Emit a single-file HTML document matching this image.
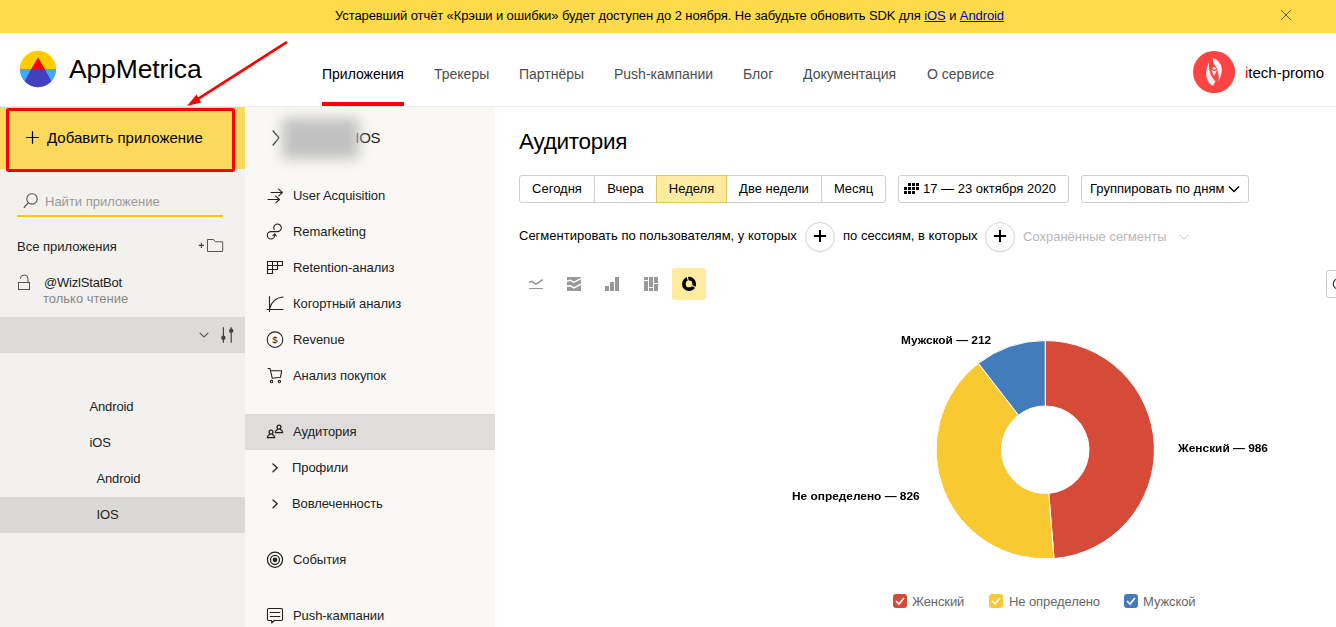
<!DOCTYPE html>
<html lang="ru">
<head>
<meta charset="utf-8">
<title>AppMetrica</title>
<style>
*{box-sizing:border-box;margin:0;padding:0}
html,body{width:1336px;height:627px;overflow:hidden;background:#fff}
body{font-family:"Liberation Sans",sans-serif;font-size:13px;color:#000;position:relative}
.abs{position:absolute}
.t{position:absolute;white-space:nowrap;line-height:1}
#banner{position:absolute;left:0;top:0;width:1336px;height:33px;background:#ffdb4c}
#banner .msg{position:absolute;left:335px;top:8px;font-size:13px;line-height:15px;white-space:nowrap;color:#000;letter-spacing:-0.1px}
#banner a{color:#0000cc;text-decoration:underline}
#header{position:absolute;left:0;top:33px;width:1336px;height:74px;background:#fff;border-bottom:1px solid #ececf2}
.nav{font-size:14px;color:#4d4d4d}
#left{position:absolute;left:0;top:107px;width:245px;height:520px;background:#f3f1ed}
#mid{position:absolute;left:245px;top:107px;width:250px;height:520px;background:#f9f8f5}
.mi{font-size:13px;color:#222;letter-spacing:-0.07px}
.btn{position:absolute;top:175px;height:28px;border:1px solid #cfcfcf;background:#fff;font-size:13px;line-height:26px;text-align:center;white-space:nowrap}
.circ{position:absolute;width:30px;height:30px;border-radius:50%;border:1px solid #d4d4d4;background:#fff;box-shadow:0 1px 1px rgba(0,0,0,.06)}
.lbl{font-size:11px;font-weight:bold;color:#000;transform-origin:0 0;transform:scaleX(1.08)}
.lg{font-size:13px;color:#666;top:595px;letter-spacing:-0.1px}
.cb{position:absolute;top:594px;width:14px;height:14px;border-radius:3px}
</style>
</head>
<body>

<!-- top banner -->
<div id="banner">
  <div class="msg">Устаревший отчёт «Крэши и ошибки» будет доступен до 2 ноября. Не забудьте обновить SDK для <a>iOS</a> и <a>Android</a></div>
  <svg class="abs" style="left:1280px;top:9px" width="12" height="12" viewBox="0 0 12 12"><path d="M1 1L11 11M11 1L1 11" stroke="#665c2c" stroke-width="1" fill="none"/></svg>
</div>

<!-- header -->
<div id="header"><div class="abs" style="left:0;top:-1px;width:1336px;height:75px">
  <svg class="abs" style="left:19px;top:18px" width="38" height="38" viewBox="0 0 38 38">
    <defs><clipPath id="lc"><circle cx="19" cy="19" r="18.2"/></clipPath></defs>
    <g clip-path="url(#lc)">
      <rect x="0" y="0" width="38" height="19" fill="#ffcc00"/>
      <rect x="0" y="19" width="38" height="19" fill="#3fa9ff"/>
      <path d="M19 7.5L25.8 19H12.2Z" fill="#ff0000"/>
      <path d="M12.2 19H25.8L36 38H2Z" fill="#4340bd"/>
    </g>
  </svg>
  <div class="t" id="logo" style="left:69px;top:24px;font-size:26.5px;color:#000;letter-spacing:-0.15px">AppMetrica</div>

  <div class="t nav" id="n1" style="left:322px;top:35px;color:#000">Приложения</div>
  <div class="t nav" id="n2" style="left:434px;top:35px">Трекеры</div>
  <div class="t nav" id="n3" style="left:519px;top:35px">Партнёры</div>
  <div class="t nav" id="n4" style="left:614px;top:35px">Push-кампании</div>
  <div class="t nav" id="n5" style="left:743px;top:35px">Блог</div>
  <div class="t nav" id="n6" style="left:803px;top:35px">Документация</div>
  <div class="t nav" id="n7" style="left:927px;top:35px">О сервисе</div>
  <div class="abs" style="left:322px;top:70px;width:82px;height:4px;background:#ff0000"></div>

  <svg class="abs" style="left:1193px;top:19px" width="42" height="42" viewBox="0 0 42 42">
    <circle cx="21.050" cy="21.050" r="21.050" fill="#fb4443"/>
    <g fill="#ffeceb">
    <path d="M19.600 7C25.500 8.500 29.800 14 28.800 20.500C28.300 24 27.200 27.500 25.500 30.200C26.200 25 25.300 19.800 23.200 16.200C22.200 14.400 21.300 13.200 20.500 12.400Z"/>
    <path d="M20 34.800C15.500 33 12.500 27 13.200 20.500C13.700 17 14.700 13.800 16 11.400C15.600 16.500 16.500 21.800 18.800 25.600C20 27.600 21.200 29.300 22.500 30.600Z"/>
    <circle cx="21.100" cy="17.200" r="1.500"/>
    <path d="M18 18.800L21.100 20.300L24.200 18.800L22.400 22.200L21.100 25.300L19.800 22.200Z"/>
    </g>
  </svg>
  <div class="t" id="user" style="left:1245px;top:33px;font-size:15px;color:#000"><span style="color:#f00">i</span>tech-promo</div>
</div></div>

<!-- left sidebar -->
<div id="left">
  <div class="abs" style="left:0;top:0;width:245px;height:62px;background:#fad95c"></div>
  <svg class="abs" style="left:26px;top:24px" width="13" height="13" viewBox="0 0 13 13"><path d="M6.500 0.200V12.800M0.200 6.500H12.800" stroke="#000" stroke-width="1.200" fill="none"/></svg>
  <div class="t" id="add" style="left:47px;top:23px;font-size:15px;color:#000">Добавить приложение</div>

  <svg class="abs" style="left:22px;top:86px" width="18" height="18" viewBox="0 0 18 18"><circle cx="10" cy="5.900" r="5.200" stroke="#555" stroke-width="1.100" fill="none"/><path d="M6.300 9.600L1.900 14.900" stroke="#555" stroke-width="1.300"/></svg>
  <div class="t" id="srch" style="left:45px;top:88px;font-size:13px;color:#999">Найти приложение</div>
  <div class="abs" style="left:17px;top:108px;width:206px;height:2px;background:#ffc800"></div>

  <div class="t" id="allapps" style="left:17px;top:133px;font-size:13px;color:#222">Все приложения</div>
  <svg class="abs" style="left:198px;top:135px" width="7" height="7" viewBox="0 0 7 7"><path d="M3.400 0.800V6M0.800 3.400H6" stroke="#444" stroke-width="1.100" fill="none"/></svg>
  <svg class="abs" style="left:207px;top:132px" width="17" height="14" viewBox="0 0 17 14"><path d="M0.500 0.500H6.500L8.500 2.800H15.700V12.500H0.500Z" stroke="#555" stroke-width="1" fill="none" stroke-linejoin="round"/></svg>

  <svg class="abs" style="left:17px;top:167px" width="14" height="18" viewBox="0 0 14 18"><rect x="1.500" y="8.500" width="11" height="7" stroke="#555" fill="none"/><path d="M3.400 4.900A3.800 3.800 0 0 1 11 4.700V8.500" stroke="#555" fill="none"/></svg>
  <div class="t" id="wiz" style="left:44px;top:169px;font-size:13px;color:#222;letter-spacing:-0.2px">@WizlStatBot</div>
  <div class="t" id="ro" style="left:43px;top:185px;font-size:13px;color:#888">только чтение</div>

  <div class="abs" style="left:0;top:210px;width:245px;height:36px;background:#dddbd7"></div>
  <svg class="abs" style="left:197.500px;top:224px" width="12" height="8" viewBox="0 0 12 8"><path d="M1.700 1.800L6 6L10.300 1.800" stroke="#555" stroke-width="1.100" fill="none"/></svg>
  <svg class="abs" style="left:219px;top:219px" width="16" height="18" viewBox="0 0 16 18"><path d="M4.400 1.200V16.700M12.200 1.200V16.700" stroke="#444" stroke-width="1.200" fill="none"/><circle cx="4.400" cy="11.800" r="2.200" fill="#444"/><circle cx="12.200" cy="4.800" r="2.200" fill="#444"/></svg>

  <div class="t" id="a1" style="left:89.400px;top:293px;font-size:13px;color:#222;letter-spacing:-0.1px">Android</div>
  <div class="t" id="a2" style="left:89.400px;top:329px;font-size:13px;color:#222;letter-spacing:-0.1px">iOS</div>
  <div class="t" id="a3" style="left:96.400px;top:365px;font-size:13px;color:#222;letter-spacing:-0.1px">Android</div>
  <div class="abs" style="left:0;top:390px;width:245px;height:36px;background:#dbd9d5"></div>
  <div class="t" id="a4" style="left:96.400px;top:401px;font-size:13px;color:#222;letter-spacing:-0.1px">IOS</div>
</div>

<!-- middle nav -->
<div id="mid">
  <svg class="abs" style="left:26px;top:21px" width="10" height="20" viewBox="0 0 10 20"><path d="M1.700 2.500L8 9.800L1.700 17.500" stroke="#333" stroke-width="1.200" fill="none"/></svg>
  <div class="t" id="ios" style="left:110.300px;top:23px;font-size:15px;color:#222;letter-spacing:-0.3px">IOS</div>
  <div class="abs" style="left:37px;top:11px;width:77px;height:41px;background:#c1c1c1;border-radius:4px;filter:blur(6.500px)"></div>

  <div class="t mi" style="left:48px;top:82px">User Acquisition</div>
  <div class="t mi" style="left:48px;top:118px">Remarketing</div>
  <div class="t mi" style="left:48px;top:154px">Retention-анализ</div>
  <div class="t mi" style="left:48px;top:190px">Когортный анализ</div>
  <div class="t mi" style="left:48px;top:226px">Revenue</div>
  <div class="t mi" style="left:48px;top:262px">Анализ покупок</div>
  <div class="abs" style="left:0;top:307px;width:250px;height:36px;background:#dfddd9"></div>
  <div class="t mi" style="left:48px;top:318px">Аудитория</div>
  <div class="t mi" style="left:47px;top:354px">Профили</div>
  <div class="t mi" style="left:47px;top:390px">Вовлеченность</div>
  <div class="t mi" style="left:48px;top:446px">События</div>
  <div class="t mi" style="left:48px;top:502px">Push-кампании</div>
</div>

<!-- content -->
<div class="t" id="h1" style="left:519px;top:130.5px;font-size:22.5px;color:#000;letter-spacing:-0.3px">Аудитория</div>

<div class="btn" style="left:519px;width:76px;border-radius:3px 0 0 3px">Сегодня</div>
<div class="btn" style="left:594px;width:63px">Вчера</div>
<div class="btn" style="left:656px;width:71px;background:#ffeba0;border-color:#e0c766;z-index:2">Неделя</div>
<div class="btn" style="left:726px;width:96px">Две недели</div>
<div class="btn" style="left:821px;width:65px;border-radius:0 3px 3px 0">Месяц</div>

<div class="btn" style="left:898px;width:171px;border-radius:3px;text-align:left;padding-left:24px">17 — 23 октября 2020</div>
<svg class="abs" style="left:904px;top:183px" width="15" height="11" viewBox="0 0 15 11" shape-rendering="crispEdges"><g fill="#000">
<rect x="4" y="0" width="3" height="3"/><rect x="8" y="0" width="3" height="3"/><rect x="12" y="0" width="3" height="3"/>
<rect x="0" y="4" width="3" height="3"/><rect x="4" y="4" width="3" height="3"/><rect x="8" y="4" width="3" height="3"/><rect x="12" y="4" width="3" height="3"/>
<rect x="0" y="8" width="3" height="3"/><rect x="4" y="8" width="3" height="3"/><rect x="8" y="8" width="3" height="3"/></g></svg>

<div class="btn" style="left:1081px;width:168px;border-radius:3px;text-align:left;padding-left:8px">Группировать по дням</div>
<svg class="abs" style="left:1228px;top:185px" width="12" height="8" viewBox="0 0 12 8"><path d="M1 1.5L6 6.5L11 1.5" stroke="#000" stroke-width="1.4" fill="none"/></svg>

<div class="t" id="seg1" style="left:519px;top:229px;font-size:13px;color:#000">Сегментировать по пользователям, у которых</div>
<div class="circ" style="left:805px;top:222px"></div>
<svg class="abs" style="left:813px;top:229px" width="14" height="14" viewBox="0 0 14 14"><path d="M7 0.900V13.100M0.900 7H13.100" stroke="#000" stroke-width="2"/></svg>
<div class="t" id="seg2" style="left:843px;top:229px;font-size:13px;color:#000">по сессиям, в которых</div>
<div class="circ" style="left:985px;top:222px"></div>
<svg class="abs" style="left:993px;top:229px" width="14" height="14" viewBox="0 0 14 14"><path d="M7 0.900V13.100M0.900 7H13.100" stroke="#000" stroke-width="2"/></svg>
<div class="t" id="seg3" style="left:1023px;top:229.500px;font-size:13px;color:#b8b8b8">Сохранённые сегменты</div>
<svg class="abs" style="left:1178px;top:233px" width="12" height="8" viewBox="0 0 12 8"><path d="M1 1.5L6 6L11 1.5" stroke="#ccc" stroke-width="1" fill="none"/></svg>

<!-- chart type icons -->
<svg class="abs" style="left:528px;top:277px" width="16" height="14" viewBox="0 0 16 14"><path d="M1 5.700C2.300 4.500 3.300 3.900 4.300 4.600L7.900 7.100L14.900 2.700" stroke="#929292" stroke-width="1.500" fill="none" stroke-linejoin="round"/><path d="M1 11.500H15" stroke="#999" stroke-width="1"/></svg>
<svg class="abs" style="left:567px;top:277px" width="14" height="14" viewBox="0 0 14 14"><rect width="14" height="14" fill="#999"/><path d="M-1 4.100L3.400 3.300L6.900 5.300L15 1" stroke="#fff" stroke-width="1.400" fill="none"/><path d="M-1 9.500L3.400 8.700L6.900 10.900L15 6.600" stroke="#fff" stroke-width="1.400" fill="none"/></svg>
<svg class="abs" style="left:605px;top:277px" width="14" height="14" viewBox="0 0 14 14"><rect x="0" y="9" width="4" height="5" fill="#999"/><rect x="5" y="5" width="4" height="9" fill="#999"/><rect x="10" y="0" width="4" height="14" fill="#999"/></svg>
<svg class="abs" style="left:644px;top:277px" width="14" height="14" viewBox="0 0 14 14" shape-rendering="crispEdges"><g fill="#999"><rect x="0" y="0" width="4" height="3"/><rect x="0" y="4" width="4" height="10"/><rect x="5" y="0" width="4" height="10"/><rect x="5" y="11" width="4" height="3"/><rect x="10" y="0" width="4" height="6"/><rect x="10" y="7" width="4" height="7"/></g></svg>
<div class="abs" style="left:672px;top:268px;width:34px;height:32px;background:#ffeba0;border-radius:3px"></div>
<svg class="abs" style="left:681px;top:276px" width="16" height="16" viewBox="0 0 16 16"><circle cx="8.050" cy="7.900" r="5.200" stroke="#000" stroke-width="3.700" fill="none"/><path d="M8.050 7.900L6.100 0.100M8.050 7.900L15.200 11.700" stroke="#ffeba0" stroke-width="1.100"/></svg>

<div class="abs" style="left:1326px;top:270px;width:20px;height:28px;border:1px solid #ccc;border-radius:3px;background:#fff"></div>
<svg class="abs" style="left:1330px;top:277px" width="6" height="14" viewBox="0 0 6 14"><ellipse cx="8" cy="6.900" rx="4.700" ry="5" stroke="#333" stroke-width="1.200" fill="none"/></svg>

<!-- donut -->
<svg class="abs" style="left:925px;top:330px" width="240" height="240" viewBox="-120 -120 240 240" id="donut"><g transform="translate(0.25,-0.25)">
<path d="M0.00 -109.20A109.2 109.2 0 0 1 8.80 108.84L3.53 43.61A43.75 43.75 0 0 0 0.00 -43.75Z" fill="#d64b38" stroke="#fff" stroke-width="1" stroke-linejoin="round"/>
<path d="M8.80 108.84A109.2 109.2 0 0 1 -66.79 -86.39L-26.76 -34.61A43.75 43.75 0 0 0 3.53 43.61Z" fill="#f9c932" stroke="#fff" stroke-width="1" stroke-linejoin="round"/>
<path d="M-66.79 -86.39A109.2 109.2 0 0 1 -0.00 -109.20L-0.00 -43.75A43.75 43.75 0 0 0 -26.76 -34.61Z" fill="#437cbb" stroke="#fff" stroke-width="1" stroke-linejoin="round"/>
</g></svg>

<div class="t lbl" id="l1" style="left:901px;top:335px">Мужской — 212</div>
<div class="t lbl" id="l2" style="left:1177.500px;top:443px">Женский — 986</div>
<div class="t lbl" id="l3" style="left:792px;top:491px">Не определено — 826</div>

<div class="cb" style="left:893px;background:#d64b38"></div>
<div class="t lg" id="g1" style="left:912px">Женский</div>
<div class="cb" style="left:989px;background:#f9c932"></div>
<div class="t lg" id="g2" style="left:1009px">Не определено</div>
<div class="cb" style="left:1124px;background:#437cbb"></div>
<div class="t lg" id="g3" style="left:1143px">Мужской</div>
<svg class="abs" style="left:893px;top:594px" width="14" height="14" viewBox="0 0 14 14"><path d="M3 7L6 10L11 4" stroke="#fff" stroke-width="1.6" fill="none"/></svg>
<svg class="abs" style="left:989px;top:594px" width="14" height="14" viewBox="0 0 14 14"><path d="M3 7L6 10L11 4" stroke="#fff" stroke-width="1.6" fill="none"/></svg>
<svg class="abs" style="left:1124px;top:594px" width="14" height="14" viewBox="0 0 14 14"><path d="M3 7L6 10L11 4" stroke="#fff" stroke-width="1.6" fill="none"/></svg>


<!-- mid nav icons (page coordinates) -->
<svg class="abs" style="left:0;top:0;pointer-events:none" width="1336" height="627" viewBox="0 0 1336 627" id="icons">
<g fill="none" stroke="#222" stroke-width="1.1" stroke-linecap="round" stroke-linejoin="round">
  <!-- user acquisition -->
  <path d="M271 192.5H282.3M278.6 189.2L282.4 192.5L278.8 195.8"/>
  <path d="M268 199.5H279.4M275.6 196.2L279.5 199.5L275.8 202.8"/>
  <!-- remarketing -->
  <path d="M274.7 235.4A3.7 3.7 0 1 1 271 231.6H277.7A3.8 3.8 0 1 0 274.2 229.6"/>
  <path d="M272.9 235.6L274.7 233.9L276.3 235.8"/>
  <!-- retention grid -->
  <path stroke-linecap="butt" d="M267 261.500H283M267 265.500H283M267 269.500H278M267 273.500H273M267.500 261V274M272.500 261V274M277.500 261V270M282.500 261V266"/>
  <!-- cohort -->
  <path d="M269.500 296.500V311.500M267 309.500H283M269.800 308.500C271 302.500 276 297.500 283 297"/>
  <!-- revenue -->
  <circle cx="275" cy="339.700" r="7.800"/>
  <!-- cart -->
  <path d="M268.200 368.500H270L272.200 378.200L280.500 377.300L281.700 370.700H270.600"/>
  <circle cx="271.600" cy="381.600" r="1.200"/><circle cx="279.400" cy="381.600" r="1.200"/>
  <!-- audience -->
  <g stroke-width="1.250"><circle cx="271" cy="432.100" r="1.900"/><path d="M267.300 437.500H274.700C274.500 435.800 273.600 434.800 272.300 434.300M269.700 434.300C268.400 434.800 267.500 435.800 267.300 437.500"/>
  <circle cx="279" cy="427.100" r="1.900"/><path d="M275.300 432.500H282.700C282.500 430.800 281.600 429.800 280.300 429.300M277.700 429.300C276.400 429.800 275.500 430.800 275.300 432.500"/></g>
  <!-- chevrons -->
  <path stroke-width="1.300" d="M273 464L277.200 467.800L273 471.700"/>
  <path stroke-width="1.300" d="M273 500L277.200 503.800L273 507.700"/>
  <!-- events -->
  <circle cx="275" cy="559.800" r="7.600" stroke-width="1.250"/><circle cx="275" cy="559.800" r="4.500" stroke-width="1.250"/><circle cx="275" cy="559.800" r="1.800" fill="#222"/>
  <!-- push -->
  <path d="M268.700 608.500H281.300Q282.500 608.500 282.500 609.700V619.300Q282.500 620.500 281.300 620.500H274.300L271.700 623V620.500H268.700Q267.500 620.500 267.500 619.300V609.700Q267.500 608.500 268.700 608.500ZM270.200 612.500H279.800M270.200 616.500H279.800"/>
</g>
<text x="275" y="343.300" font-family="Liberation Sans, sans-serif" font-size="9.500" fill="#222" text-anchor="middle">$</text>
<!-- annotation -->
<rect x="7.500" y="109.500" width="226" height="61" rx="1" fill="none" stroke="#ff0000" stroke-width="3"/>
<path d="M286 42.600L193 102.200" stroke="#ff0000" stroke-width="2.700" stroke-linecap="round" fill="none"/>
<path d="M187 106.100L196.500 94.400L201.200 102.600Z" fill="#ff0000"/>
</svg>
</body>
</html>
